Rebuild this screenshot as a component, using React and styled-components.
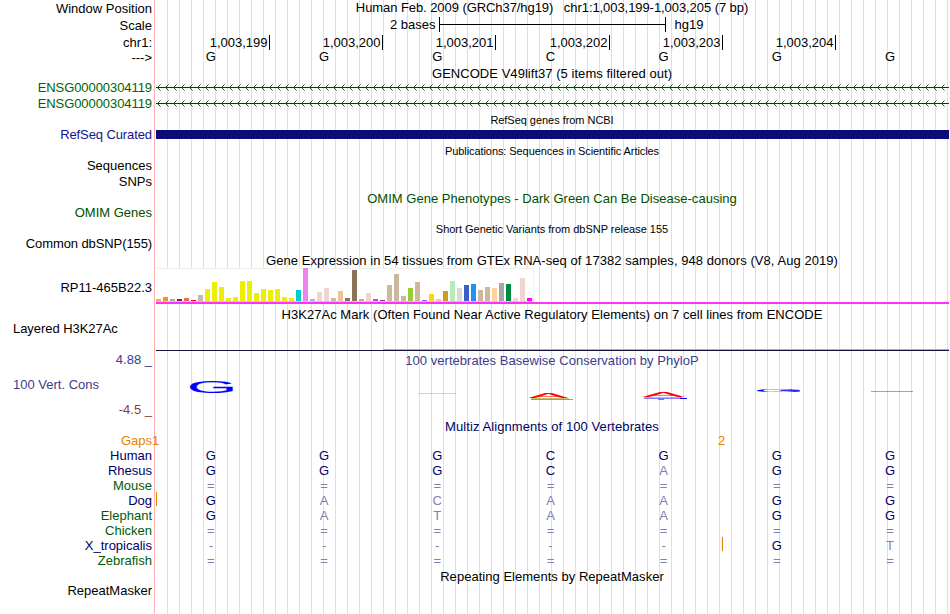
import React from 'react';
import styled, { createGlobalStyle, ThemeProvider } from 'styled-components';

const theme = {
  colors: {
    text: '#000000',
    gene: '#006400',
    omim: '#005000',
    refseq: '#14148c',
    phylop: '#3c3c8c',
    phylopNeg: '#8c3c3c',
    species: '#000064',
    speciesAlt: '#005a0a',
    gap: '#e68200',
    mismatch: '#8080b4',
    guide: '#dcdcf8',
    edge: '#ffb0b0',
  },
};

const GlobalStyle = createGlobalStyle`
  body {
    margin: 0;
    background: white;
    overflow: hidden;
  }
`;

const Browser = styled.div`
  width: 950px;
  height: 614px;
  overflow: hidden;
  font-family: 'Liberation Sans', Arial, sans-serif;
  font-size: 13px;
  line-height: 15px;
  white-space: pre;
  color: ${props => props.theme.colors.text};
  background:
    linear-gradient(${props => props.theme.colors.edge}, ${props => props.theme.colors.edge}) 154px 0 / 1px 100% no-repeat,
    linear-gradient(white, white) 0 0 / 156px 100% no-repeat,
    linear-gradient(to right, transparent 11px, ${props => props.theme.colors.guide} 11px) 156px 0 / 12px 100% repeat-x;
`;

const Row = styled.div`
  display: flex;
  height: ${props => props.$h}px;
`;

const Label = styled.div`
  box-sizing: border-box;
  width: 155px;
  flex: none;
  padding: ${props => props.$top || 0}px 3px 0 13px;
  text-align: ${props => props.$align || 'right'};
  color: ${props => props.theme.colors[props.$color || 'text']};
  letter-spacing: ${props => props.$spacing || 0}px;
`;

const LabelStack = styled.div`
  width: 155px;
  flex: none;
  display: flex;
  flex-direction: column;
  gap: 10px;
  padding-top: 1px;
`;

const Track = styled.div`
  position: relative;
  flex: 1;
  min-width: 0;
`;

const Title = styled.div`
  padding: ${props => props.$top || 0}px 1px 0 0;
  text-align: center;
  font-size: ${props => (props.$small ? 11 : 13)}px;
  letter-spacing: ${props => props.$spacing || 0}px;
  color: ${props => props.theme.colors[props.$color || 'text']};
`;

const ScaleTrack = styled(Track)`
  display: flex;
  padding-left: 235px;
`;

const ScaleBar = styled.div`
  box-sizing: border-box;
  width: 227px;
  height: 15px;
  margin: 0 9px 0 3px;
  border: solid black;
  border-width: 0 1px;
  background: linear-gradient(black, black) 0 7px / 100% 1px no-repeat;
`;

const Ruler = styled.div`
  display: grid;
  grid-template-columns: 113px 113px 113px 114px 113px 113px;
  margin-left: 2px;
  height: 14px;
`;

const Tick = styled.div`
  padding-right: 1.5px;
  border-right: 1px solid black;
  text-align: right;
`;

const Bases = styled.div`
  display: grid;
  grid-template-columns: repeat(7, 113.2px);
  margin-left: -0.7px;
  text-align: center;
`;

const Base = styled.span`
  color: ${props => props.theme.colors[props.$color]};
`;

const RefSeqBar = styled.div`
  height: 9px;
  margin: 3px 1px 0;
  background: #0c0c78;
`;

const GtexTrack = styled(Track)`
  margin-left: 1px;
  margin-right: 1px;
  border-bottom: 2px solid #ff30ff;
`;

const GtexChart = styled.div`
  box-sizing: border-box;
  display: flex;
  align-items: flex-end;
  gap: 2px;
  width: 378px;
  height: 34px;
  background: white;
  border: solid #f0f0f0;
  border-width: 1px 1px 0 0;
  box-shadow: inset 0 -1px #cccccc;
  padding-bottom: 1px;
`;

const GtexBar = styled.div`
  width: 5px;
  flex: none;
  height: ${props => props.$h}px;
  background: ${props => props.$color};
`;

const SignalLine = styled.div`
  height: 1px;
  margin: ${props => props.$top}px 1px 0 ${props => props.$left}px;
  background: ${props => props.$color};
`;

const GapCount = styled.span`
  position: absolute;
  left: ${props => props.$x}px;
  top: 0;
  width: 9px;
  text-align: center;
  color: ${props => props.theme.colors.gap};
`;

const InsertMark = styled.span`
  position: absolute;
  left: ${props => props.$x}px;
  top: -1px;
  width: 1px;
  height: 14px;
  background: ${props => props.theme.colors.gap};
`;

const Drawing = styled.svg`
  display: block;
`;

const positions = ['1,003,199', '1,003,200', '1,003,201', '1,003,202', '1,003,203', '1,003,204'];

const tan = '#cdb79e';
const brain = '#eeee00';
const pink = '#eed5d2';

// [height, colour] for each of the 54 tissues
const tissues = [
  [2, '#ffa54f'], [4, '#ee9a00'], [2, '#8fbc8f'], [2, '#8b1c62'], [3, '#ee6a50'], [1, '#ff0000'],
  [6, tan], [12, brain], [19, brain], [14, brain], [3, brain], [4, brain], [20, brain], [20, brain],
  [8, brain], [12, brain], [11, brain], [12, brain], [4, brain], [3, brain], [11, '#00cdcd'],
  [33, '#ee82ee'], [2, '#9ac0cd'], [9, pink], [13, pink], [3, tan], [10, '#eec591'], [3, '#8b7355'],
  [31, '#8b7355'], [2, '#cdaa7d'], [8, pink], [2, '#b452cd'], [1, '#7a378b'], [16, tan], [27, tan],
  [5, tan], [13, '#9acd32'], [19, tan], [1, '#7a67ee'], [7, '#ffd700'], [2, '#ffb6c1'],
  [10, '#cd9b1d'], [20, '#b4eeb4'], [13, '#d9d9d9'], [16, '#3a5fcd'], [17, '#1e90ff'], [11, tan],
  [14, tan], [13, '#ffd39b'], [18, '#a6a6a6'], [17, '#008b45'], [3, pink], [23, pink], [3, '#ff00ff'],
];

const alignments = [
  { name: 'Human', bases: 'GGGCGGG' },
  { name: 'Rhesus', bases: 'GGGCAGG' },
  { name: 'Mouse', bases: '=======', alt: true },
  { name: 'Dog', bases: 'GACAAGG', insert: 1 },
  { name: 'Elephant', bases: 'GATAAGG', alt: true },
  { name: 'Chicken', bases: '=======', alt: true },
  { name: 'X_tropicalis', bases: '-----GT', insert: 567 },
  { name: 'Zebrafish', bases: '=======', alt: true },
];

const reference = 'GGGCGGG';

const TitleRow = ({ h, children, ...rest }) => (
  <Row $h={h}>
    <Label />
    <Track><Title {...rest}>{children}</Title></Track>
  </Row>
);

const LabelRow = ({ h, name, children, ...rest }) => (
  <Row $h={h}>
    <Label {...rest}>{name}</Label>
    <Track>{children}</Track>
  </Row>
);

const GeneArrows = ({ id }) => (
  <Drawing width="794" height="16">
    <defs>
      <pattern id={id} x="2" y="0" width="8" height="16" patternUnits="userSpaceOnUse">
        <path d="M3.5 4.5 L0.5 7.5 L3.5 10.5" fill="none" stroke="#004600" strokeWidth="0.9" />
      </pattern>
    </defs>
    <rect x="2" width="792" height="16" fill={`url(#${id})`} />
    <rect x="1" y="7" width="793" height="1" fill="#004600" />
  </Drawing>
);

// One letter of the conservation logo, stretched to fill its box
const LogoLetter = ({ letter, x, y, width, height, color }) => {
  const [left, glyphWidth, glyphHeight] = letter === 'G' ? [0.5, 6.6, 7.1] : [0.05, 6.6, 6.9];
  const sx = width / glyphWidth;
  const sy = height / glyphHeight;
  return (
    <text
      transform={`translate(${x - left * sx} ${y + height}) scale(${sx} ${sy})`}
      fontSize="10"
      fill={color}
      stroke={color}
      strokeWidth="0.1"
    >
      {letter}
    </text>
  );
};

const App = () => (
  <ThemeProvider theme={theme}>
    <GlobalStyle />
    <Browser>
      <Row $h={17}>
        <Label $top={1}>Window Position</Label>
        <Track>
          <Title $spacing={-0.07}>{'Human Feb. 2009 (GRCh37/hg19)   chr1:1,003,199-1,003,205 (7 bp)'}</Title>
        </Track>
      </Row>
      <Row $h={18}>
        <Label $top={1}>Scale</Label>
        <ScaleTrack>
          2 bases
          <ScaleBar />
          hg19
        </ScaleTrack>
      </Row>
      <LabelRow h={14} name="chr1:">
        <Ruler>{positions.map(p => <Tick key={p}>{p}</Tick>)}</Ruler>
      </LabelRow>
      <LabelRow h={17} name="--->" $top={1}>
        <Bases>{reference.split('').map((b, i) => <Base key={i} $color="text">{b}</Base>)}</Bases>
      </LabelRow>

      <TitleRow h={14} $spacing={0.04}>GENCODE V49lift37 (5 items filtered out)</TitleRow>
      <LabelRow h={16} name="ENSG00000304119" $color="gene" $spacing={-0.07}><GeneArrows id="arrowsA" /></LabelRow>
      <LabelRow h={16} name="ENSG00000304119" $color="gene" $spacing={-0.07}><GeneArrows id="arrowsB" /></LabelRow>

      <TitleRow h={15} $small $top={1} $spacing={-0.04}>RefSeq genes from NCBI</TitleRow>
      <LabelRow h={16} name="RefSeq Curated" $color="refseq" $spacing={-0.1}><RefSeqBar /></LabelRow>

      <TitleRow h={15} $small $top={1} $spacing={-0.08}>Publications: Sequences in Scientific Articles</TitleRow>
      <LabelRow h={16} name="Sequences" />
      <LabelRow h={16} name="SNPs" />

      <TitleRow h={15} $top={1} $color="omim" $spacing={0.02}>OMIM Gene Phenotypes - Dark Green Can Be Disease-causing</TitleRow>
      <LabelRow h={16} name="OMIM Genes" $color="omim" />

      <TitleRow h={15} $small $top={1} $spacing={-0.02}>Short Genetic Variants from dbSNP release 155</TitleRow>
      <LabelRow h={17} name="Common dbSNP(155)" $spacing={-0.1} />

      <TitleRow h={15} $spacing={0.05}>
        Gene Expression in 54 tissues from GTEx RNA-seq of 17382 samples, 948 donors (V8, Aug 2019)
      </TitleRow>
      <Row $h={36}>
        <Label $top={12}>RP11-465B22.3</Label>
        <GtexTrack>
          <GtexChart>
            {tissues.map(([h, color], i) => <GtexBar key={i} $h={h} $color={color} />)}
          </GtexChart>
        </GtexTrack>
      </Row>

      <TitleRow h={17} $top={3} $spacing={0.04}>
        H3K27Ac Mark (Often Found Near Active Regulatory Elements) on 7 cell lines from ENCODE
      </TitleRow>
      <LabelRow h={30} name="Layered H3K27Ac" $align="left" $spacing={-0.05}>
        <SignalLine $top={28} $left={228} $color="#82b9eb" />
        <SignalLine $top={0} $left={1} $color="#14143c" />
      </LabelRow>

      <Row $h={68}>
        <LabelStack>
          <Label $color="phylop">4.88 _</Label>
          <Label $color="phylop" $align="left">100 Vert. Cons</Label>
          <Label $color="phylopNeg">-4.5 _</Label>
        </LabelStack>
        <Track>
          <Title $top={2} $color="phylop" $spacing={0.03}>100 vertebrates Basewise Conservation by PhyloP</Title>
          <Drawing width="795" height="46" viewBox="155 368 795 46">
            <LogoLetter letter="G" x={190.3} y={381.2} width={42.5} height={11.4} color="#0000ff" />
            <rect x="418" y="393" width="38" height="1" fill="#b4b450" opacity="0.5" />
            <LogoLetter letter="A" x={529} y={393} width={39} height={5} color="#ff0000" />
            <rect x="531" y="398" width="38" height="1" fill="#b4b43c" opacity="0.8" />
            <rect x="531" y="399" width="42" height="1" fill="#0000ff" opacity="0.45" />
            <LogoLetter letter="A" x={643} y={393} width={41} height={4.4} color="#ff0000" />
            <rect x="644" y="397" width="38" height="1" fill="#0000ff" opacity="0.3" />
            <rect x="644" y="398" width="43" height="1" fill="#0000ff" opacity="0.5" />
            <rect x="680" y="398" width="7" height="1" fill="#0000ff" />
            <rect x="658" y="399" width="6" height="1" fill="#00dc00" />
            <LogoLetter letter="G" x={757} y={389} width={43} height={2.8} color="#0000ff" />
            <rect x="871" y="391" width="42" height="1" fill="#0000ff" opacity="0.4" />
          </Drawing>
        </Track>
      </Row>

      <TitleRow h={14} $color="species" $spacing={0.08}>Multiz Alignments of 100 Vertebrates</TitleRow>
      <LabelRow h={15} name="Gaps" $color="gap">
        <GapCount $x={-4}>1</GapCount>
        <GapCount $x={562}>2</GapCount>
      </LabelRow>
      {alignments.map(({ name, bases, alt, insert }) => (
        <LabelRow key={name} h={15} name={name} $color={alt ? 'speciesAlt' : 'species'}>
          <Bases>
            {bases.split('').map((b, i) => (
              <Base key={i} $color={b === reference[i] ? 'species' : 'mismatch'}>{b}</Base>
            ))}
          </Bases>
          {insert && <InsertMark $x={insert} />}
        </LabelRow>
      ))}

      <TitleRow h={15} $top={1} $spacing={0.03}>Repeating Elements by RepeatMasker</TitleRow>
      <LabelRow h={16} name="RepeatMasker" />
    </Browser>
  </ThemeProvider>
);

export default App;
